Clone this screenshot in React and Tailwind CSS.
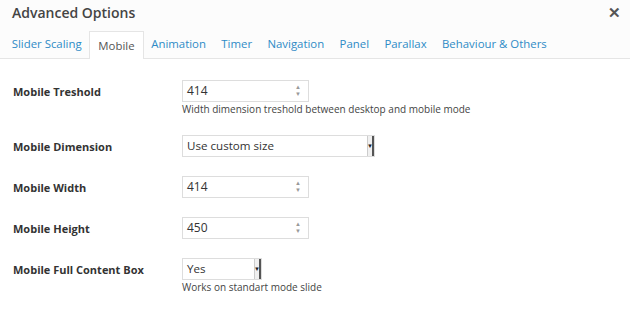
import { useState } from "react";

const tabs = [
  "Slider Scaling",
  "Mobile",
  "Animation",
  "Timer",
  "Navigation",
  "Panel",
  "Parallax",
  "Behaviour & Others",
];

function NumberBox({ value }) {
  return (
    <div className="flex h-[22px] w-[127px] items-center justify-between border border-[#dddddd] bg-white pl-[4px] pr-[7px] text-[12px] text-[#333]">
      <span>{value}</span>
      <span className="flex flex-col items-center text-[6px] leading-[7px] text-[#999]">
        <span>▲</span>
        <span>▼</span>
      </span>
    </div>
  );
}

function SelectBox({ value, width }) {
  return (
    <div
      className={`flex h-[22px] items-center justify-between border border-[#dddddd] bg-white pl-[4px] text-[11.6px] text-[#333] ${width}`}
    >
      <span>{value}</span>
      <span className="flex h-full w-[7px] items-center justify-center border-l border-[#ccc] border-r-2 border-r-[#555] bg-[#f0f0f0] text-[6px] text-[#222]">
        ▼
      </span>
    </div>
  );
}

function Row({ label, children, note }) {
  return (
    <div className="flex items-start">
      <div className="w-[169px] pt-[4px] text-[11px] font-bold text-[#333]">
        {label}
      </div>
      <div className="flex flex-col">
        {children}
        {note && (
          <div className="mt-[1px] text-[10px] leading-[13px] text-[#444]">
            {note}
          </div>
        )}
      </div>
    </div>
  );
}

export default function App() {
  const [active, setActive] = useState("Mobile");

  return (
    <div
      className="h-[334px] w-[630px] bg-white"
      style={{ fontFamily: '"Open Sans", sans-serif' }}
    >
      <div className="border-b border-[#e5e5e5] bg-[#fcfcfc]">
        <div className="flex h-[25px] items-center justify-between pl-[12px] pr-[9px]">
          <h1 className="text-[14px] font-semibold text-[#444]">
            Advanced Options
          </h1>
          <span className="text-[15px] font-bold leading-none text-[#555]">
            ✕
          </span>
        </div>
        <div className="flex h-[33px] items-end pl-[4px]">
          {tabs.map((t) =>
            t === active ? (
              <button
                key={t}
                onClick={() => setActive(t)}
                className="-mb-px h-[28px] border border-b-0 border-[#e5e5e5] bg-white px-[8px] text-[11.4px] text-[#555]"
              >
                {t}
              </button>
            ) : (
              <button
                key={t}
                onClick={() => setActive(t)}
                className="h-[28px] px-[7.7px] text-[11.4px] text-[#2e8bc6]"
              >
                {t}
              </button>
            )
          )}
        </div>
      </div>

      <div className="flex flex-col gap-[19px] pl-[13px] pt-[21px]">
        <Row
          label="Mobile Treshold"
          note="Width dimension treshold between desktop and mobile mode"
        >
          <NumberBox value="414" />
        </Row>
        <Row label="Mobile Dimension">
          <SelectBox value="Use custom size" width="w-[193px]" />
        </Row>
        <Row label="Mobile Width">
          <NumberBox value="414" />
        </Row>
        <Row label="Mobile Height">
          <NumberBox value="450" />
        </Row>
        <Row label="Mobile Full Content Box" note="Works on standart mode slide">
          <SelectBox value="Yes" width="w-[80px]" />
        </Row>
      </div>
    </div>
  );
}
